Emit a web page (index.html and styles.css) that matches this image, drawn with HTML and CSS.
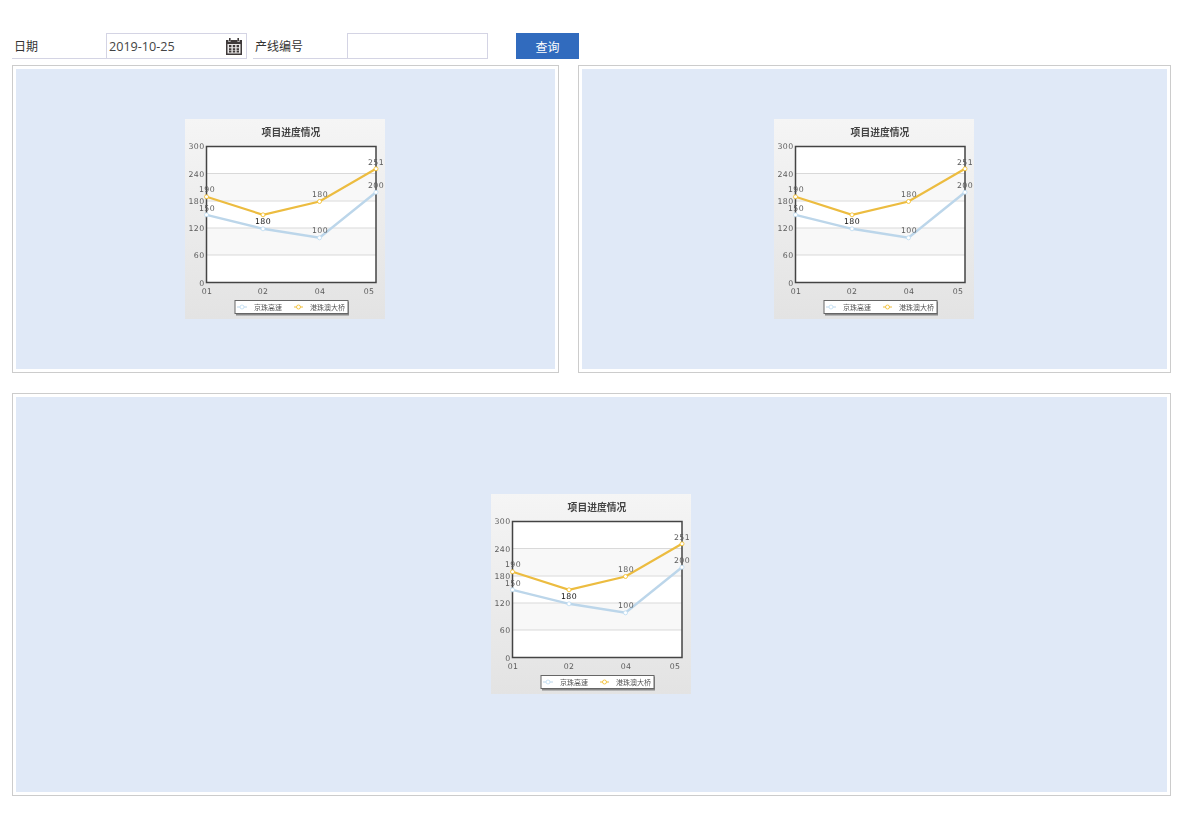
FILE: index.html
```html
<!DOCTYPE html>
<html lang="zh-CN">
<head>
    <meta charset="UTF-8">
    <title>项目进度情况</title>
    <link rel="stylesheet" href="styles.css">
</head>
<body>
    <!-- shared chart, used by all three panels -->
    <svg class="defs" width="0" height="0">
        <defs>
            <linearGradient id="chartBg" x1="0" y1="0" x2="0" y2="1">
                <stop offset="0" stop-color="#f5f5f5"/>
                <stop offset="1" stop-color="#e3e3e3"/>
            </linearGradient>
            <symbol id="progressChart" viewBox="0 0 200 200">
                <rect width="200" height="200" fill="url(#chartBg)"/>
                <text class="chart-title" x="106" y="17" text-anchor="middle">项目进度情况</text>

                <rect x="21.5" y="27.5" width="169.5" height="136" fill="#fff"/>
                <rect x="21.5" y="54.5" width="169.5" height="27" fill="#f8f8f8"/>
                <rect x="21.5" y="109" width="169.5" height="27" fill="#f8f8f8"/>
                <path class="grid" d="M22 54.5H191M22 82H191M22 109H191M22 136H191"/>
                <rect class="plot" x="21.5" y="27.5" width="169.5" height="136"/>

                <g class="axis-y" text-anchor="end">
                    <text x="19.5" y="30">300</text>
                    <text x="19.5" y="57.5">240</text>
                    <text x="19.5" y="85">180</text>
                    <text x="19.5" y="112">120</text>
                    <text x="19.5" y="139">60</text>
                    <text x="19.5" y="166.5">0</text>
                </g>
                <g class="axis-x" text-anchor="middle">
                    <text x="22" y="174.5">01</text>
                    <text x="78" y="174.5">02</text>
                    <text x="135" y="174.5">04</text>
                    <text x="184" y="174.5">05</text>
                </g>

                <polyline class="line-blue" points="21.5,95.8 78,109.8 134.5,118.8 191,73.2"/>
                <polyline class="line-yellow" points="21.5,77.8 78,95.8 134.5,82.5 191,49.8"/>
                <g class="dot-blue">
                    <circle cx="21.5" cy="95.8" r="2"/>
                    <circle cx="78" cy="109.8" r="2"/>
                    <circle cx="134.5" cy="118.8" r="2"/>
                    <circle cx="191" cy="73.2" r="2"/>
                </g>
                <g class="dot-yellow">
                    <circle cx="21.5" cy="77.8" r="2"/>
                    <circle cx="78" cy="95.8" r="2"/>
                    <circle cx="134.5" cy="82.5" r="2"/>
                    <circle cx="191" cy="49.8" r="2"/>
                </g>

                <g class="labels" text-anchor="middle">
                    <text x="22" y="73">190</text>
                    <text x="22" y="92">150</text>
                    <text class="label-dark" x="78" y="105">180</text>
                    <text x="135" y="78">180</text>
                    <text x="135" y="114">100</text>
                    <text x="191" y="45.5">251</text>
                    <text x="191" y="68.5">200</text>
                </g>

                <rect x="51" y="182.5" width="113" height="14" fill="#888"/>
                <rect class="legend-box" x="50" y="181.5" width="113" height="13"/>
                <path class="line-blue thin" d="M52 188H62"/>
                <circle class="legend-dot-blue" cx="57" cy="188" r="2"/>
                <text class="legend-text" x="69" y="190.5">京珠高速</text>
                <path class="line-yellow thin" d="M109 188H118"/>
                <circle class="legend-dot-yellow" cx="113.5" cy="188" r="2"/>
                <text class="legend-text" x="125" y="190.5">港珠澳大桥</text>
            </symbol>
        </defs>
    </svg>

    <form class="toolbar">
        <label class="field-label field-date">日期</label>
        <div class="field-input">
            <input class="date-value" type="text" value="2019-10-25">
            <svg class="calendar" width="18" height="17" viewBox="0 0 18 17">
                <path fill="#3f3a3a" d="M1 2h2.5v2h2V2h7v2h2V2H17v15H1z"/>
                <rect x="4" y="0" width="1.6" height="3.4" fill="#3f3a3a"/>
                <rect x="12.4" y="0" width="1.6" height="3.4" fill="#3f3a3a"/>
                <rect x="2.5" y="6" width="13" height="9.5" fill="#e9e7e7"/>
                <path fill="#3f3a3a" d="M4 7h2.4v2.2H4zM7.8 7h2.4v2.2H7.8zM11.6 7H14v2.2h-2.4zM4 10.2h2.4v2.2H4zM7.8 10.2h2.4v2.2H7.8zM11.6 10.2H14v2.2h-2.4zM4 13h2.4v1.6H4zM7.8 13h2.4v1.6H7.8zM11.6 13H14v1.6h-2.4z"/>
            </svg>
        </div>
        <label class="field-label field-line">产线编号</label>
        <div class="field-input">
            <input class="date-value" type="text">
        </div>
        <button class="query-btn" type="button">查询</button>
    </form>

    <div class="panels">
        <div class="panel-row">
            <section class="panel panel-left">
                <div class="panel-fill"><svg class="chart" viewBox="0 0 200 200"><use href="#progressChart"/></svg></div>
            </section>
            <section class="panel panel-right">
                <div class="panel-fill"><svg class="chart" viewBox="0 0 200 200"><use href="#progressChart"/></svg></div>
            </section>
        </div>
        <section class="panel panel-wide">
            <div class="panel-fill"><svg class="chart" viewBox="0 0 200 200"><use href="#progressChart"/></svg></div>
        </section>
    </div>
</body>
</html>
```

FILE: styles.css
```css
body {
    margin: 0;
    background: #fff;
    color: #333;
    font-family: "Open Sans", "Noto Sans CJK SC", sans-serif;
    font-size: 12px;
}
.defs {
    display: block;
    height: 0;
}
.toolbar {
    display: flex;
    align-items: stretch;
    height: 26px;
    margin: 33px 0 0 12px;
}
.field-label {
    display: flex;
    align-items: center;
    box-sizing: border-box;
    height: 26px;
    padding-left: 2px;
    border-bottom: 1px solid #d4d4e4;
    color: #333;
}
.field-date {
    width: 94px;
}
.field-line {
    width: 94px;
    margin-left: 6px;
}
.field-input {
    display: flex;
    align-items: center;
    box-sizing: border-box;
    width: 141px;
    height: 26px;
    border: 1px solid #d4d4e4;
}
.date-value {
    flex: 1;
    min-width: 0;
    padding: 0 0 0 2px;
    border: none;
    outline: none;
    background: transparent;
    color: #444;
    font-family: "Open Sans", sans-serif;
    font-size: 12.6px;
}
.calendar {
    flex: none;
    margin-right: 3px;
}
.query-btn {
    width: 63px;
    height: 26px;
    margin-left: 28px;
    padding: 0;
    border: none;
    background: #316bbe;
    color: #fff;
    font-family: "Noto Sans CJK SC", sans-serif;
    font-size: 12px;
}
.panels {
    display: flex;
    flex-direction: column;
    gap: 20px;
    width: 1159px;
    margin: 6px 0 0 12px;
}
.panel-row {
    display: flex;
    justify-content: space-between;
}
.panel {
    box-sizing: border-box;
    padding: 3px;
    border: 1px solid #ccc;
}
.panel-left {
    width: 547px;
    height: 308px;
}
.panel-right {
    width: 593px;
    height: 308px;
}
.panel-wide {
    height: 403px;
}
.panel-fill {
    display: flex;
    align-items: center;
    justify-content: center;
    height: 100%;
    background: #e0e9f7;
}
.chart {
    display: block;
    width: 200px;
    height: 200px;
    margin-right: 1px;
    filter: blur(0.35px);
}
.panel-wide .chart {
    margin-bottom: 1px;
}
.chart-title {
    fill: #444;
    font-family: "Noto Sans CJK SC", sans-serif;
    font-size: 9.8px;
    font-weight: 700;
}
.grid {
    fill: none;
    stroke: #d9d9d9;
    stroke-width: 1;
}
.plot {
    fill: none;
    stroke: #444;
    stroke-width: 1.5;
}
.axis-y,
.axis-x,
.labels {
    fill: #5c5c5c;
    font-family: "DejaVu Sans", sans-serif;
    font-size: 7.8px;
    letter-spacing: 0.4px;
}
.label-dark {
    fill: #111;
}
.line-blue,
.line-yellow {
    fill: none;
    stroke-width: 2.4;
}
.line-blue {
    stroke: #bcd6ea;
}
.line-yellow {
    stroke-width: 2.2;
    stroke: #ecbc40;
}
.thin {
    stroke-width: 1;
}
.dot-blue circle,
.legend-dot-blue {
    fill: #fff;
    stroke: #bcdcf3;
    stroke-width: 0.8;
}
.dot-yellow circle,
.legend-dot-yellow {
    fill: #fff;
    stroke: #f4bb1f;
    stroke-width: 0.8;
}
.legend-box {
    fill: #fff;
    stroke: #666;
    stroke-width: 1;
}
.legend-text {
    fill: #555;
    font-family: "Noto Sans CJK SC", sans-serif;
    font-size: 7px;
}
```
